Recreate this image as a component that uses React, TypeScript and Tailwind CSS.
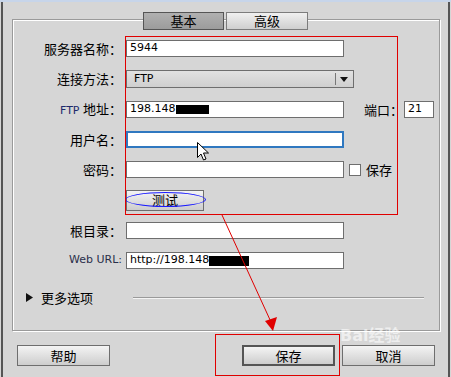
const cjk = "font-['SimSun','Noto_Sans_CJK_SC',sans-serif]";
const latin = "font-['DejaVu_Sans','Liberation_Sans',sans-serif]";

function Field({ value, w = "w-[218px]", focus = false }: { value?: React.ReactNode; w?: string; focus?: boolean }) {
  return (
    <div
      className={`${w} h-[17px] bg-white flex items-center px-[3px] text-[11px] text-black ${latin} ${
        focus ? "border-2 border-[#2f78c0]" : "border border-[#6e6e6e]"
      }`}
    >
      {value}
    </div>
  );
}

function Label({ children }: { children: React.ReactNode }) {
  return (
    <div className={`w-[110px] shrink-0 text-right text-[13px] text-black ${cjk} pr-[1px]`}>
      {children}：
    </div>
  );
}

function Btn({ children, main = false, w = "w-[93px]" }: { children: React.ReactNode; main?: boolean; w?: string }) {
  return (
    <div
      className={`${w} h-[21px] flex items-center justify-center text-[13px] text-black ${cjk} bg-gradient-to-b from-[#f4f4f4] to-[#cdcdcd] ${
        main ? "border-2 border-[#555]" : "border border-[#6e6e6e]"
      }`}
    >
      {children}
    </div>
  );
}

export default function App() {
  return (
    <div className="relative w-[451px] h-[377px] bg-[#d6d6d6] overflow-hidden border-t-2 border-[#c7d5ea]">
      {/* window edges */}
      <div className="absolute left-[1px] top-0 bottom-0 w-[2px] bg-[#555]" />
      <div className="absolute right-[1px] top-0 bottom-0 w-[2px] bg-[#555]" />

      {/* panel */}
      <div className="relative ml-[12px] mt-[17px] w-[428px] h-[312px] border border-[#9a9a9a] shadow-[inset_1px_1px_0_#fff,1px_1px_0_#fff]">
        {/* tabs */}
        <div className="absolute left-[130px] top-[-8px] flex gap-[2px]">
          <div className={`w-[81px] h-[18px] flex items-center justify-center border border-[#555] bg-gradient-to-b from-[#b0b0b0] to-[#9c9c9c] text-[13px] text-black ${cjk}`}>
            基本
          </div>
          <div className={`w-[82px] h-[18px] flex items-center justify-center border border-[#7c7c7c] bg-gradient-to-b from-[#f0f0f0] to-[#cfcfcf] text-[13px] text-black ${cjk}`}>
            高级
          </div>
        </div>

        <div className="flex flex-col pt-[20px]">
          <div className="flex items-center h-[17px]">
            <Label>服务器名称</Label>
            <div className="ml-[3px]">
              <Field value="5944" />
            </div>
          </div>

          <div className="flex items-center h-[18px] mt-[13px]">
            <Label>连接方法</Label>
            <div className="ml-[3px] w-[228px] h-[18px] border border-[#6e6e6e] bg-gradient-to-b from-[#e2e2e2] to-[#cfcfcf] flex items-center">
              <span className={`flex-1 pl-[7px] text-[11px] text-black ${latin}`}>FTP</span>
              <div className="w-px h-[12px] bg-[#777]" />
              <svg width="17" height="10" viewBox="0 0 17 10">
                <path d="M4 3h8l-4 5z" fill="#111" />
              </svg>
            </div>
          </div>

          <div className="flex items-center h-[17px] mt-[13px]">
            <div className={`w-[110px] shrink-0 text-right text-[13px] text-black ${cjk} pr-[1px]`}>
              <span className={`text-[11px] text-[#1d2a6b] ${latin}`}>FTP </span>地址：
            </div>
            <div className="ml-[3px]">
              <Field
                value={
                  <>
                    198.148<span className="inline-block w-[33px] h-[9px] bg-black" />
                  </>
                }
              />
            </div>
            <div className={`ml-[20px] text-[13px] text-black ${cjk}`}>端口：</div>
            <div className="ml-[1px]">
              <Field value="21" w="w-[30px]" />
            </div>
          </div>

          <div className="flex items-center h-[17px] mt-[13px]">
            <Label>用户名</Label>
            <div className="ml-[3px]">
              <Field focus />
            </div>
          </div>

          <div className="flex items-center h-[17px] mt-[13px]">
            <Label>密码</Label>
            <div className="ml-[3px]">
              <Field />
            </div>
            <div className="ml-[5px] w-[12px] h-[12px] bg-white border border-[#6e6e6e]" />
            <span className={`ml-[5px] text-[13px] text-black ${cjk}`}>保存</span>
          </div>

          <div className="flex items-center h-[18px] mt-[13px]">
            <div className="w-[113px] shrink-0" />
            <div className="relative">
              <Btn w="w-[78px]">测试</Btn>
              <div className="absolute left-[-1px] top-[2px] w-[81px] h-[15px] rounded-[50%] border border-[#1a1aff]" />
            </div>
          </div>

          <div className="flex items-center h-[17px] mt-[13px]">
            <Label>根目录</Label>
            <div className="ml-[3px]">
              <Field />
            </div>
          </div>

          <div className="flex items-center h-[17px] mt-[13px]">
            <div className={`w-[110px] shrink-0 text-right text-[11px] text-[#2a2f4a] ${latin} pr-[1px]`}>Web URL:</div>
            <div className="ml-[3px]">
              <Field
                value={
                  <>
                    http://198.148<span className="inline-block w-[40px] h-[10px] bg-black" />
                  </>
                }
              />
            </div>
          </div>

          <div className="flex items-center h-[17px] mt-[20px] pl-[13px]">
            <svg width="7" height="9" viewBox="0 0 7 9">
              <path d="M0 0l7 4.5L0 9z" fill="#111" />
            </svg>
            <span className={`ml-[8px] text-[13px] text-black ${cjk}`}>更多选项</span>
            <div className="ml-[40px] w-[291px] h-px bg-[#9a9a9a] shadow-[0_1px_0_#f4f4f4]" />
          </div>
        </div>
      </div>

      {/* bottom buttons */}
      <div className="flex items-center mt-[14px] pl-[17px]">
        <Btn>帮助</Btn>
        <div className="ml-[132px]">
          <Btn main>保存</Btn>
        </div>
        <div className="ml-[7px]">
          <Btn>取消</Btn>
        </div>
      </div>

      {/* annotations */}
      <div className="absolute left-[125px] top-[34px] w-[273px] h-[179px] border border-[#e00000]" />
      <div className="absolute left-[215px] top-[332px] w-[125px] h-[42px] border border-[#e00000]" />
      <svg className="absolute left-0 top-0" width="451" height="377" viewBox="0 0 451 377">
        <line x1="222" y1="213" x2="271" y2="320" stroke="#e00000" strokeWidth="1" />
        <path d="M265 319l12 -4l-4 14z" fill="#e00000" />
      </svg>
      {/* mouse cursor */}
      <svg className="absolute left-[197px] top-[140px]" width="13" height="20" viewBox="0 0 13 20">
        <path d="M0.5 0.5v15l3.5-3.5 2.5 6 2.5-1-2.5-6h5z" fill="#fff" stroke="#000" strokeWidth="1" strokeLinejoin="miter" />
      </svg>
      <div className={`absolute left-[340px] top-[322px] text-[16px] leading-[20px] font-bold text-white/60 ${latin}`}>
        Bai<span className={cjk}>经验</span>
      </div>
    </div>
  );
}
